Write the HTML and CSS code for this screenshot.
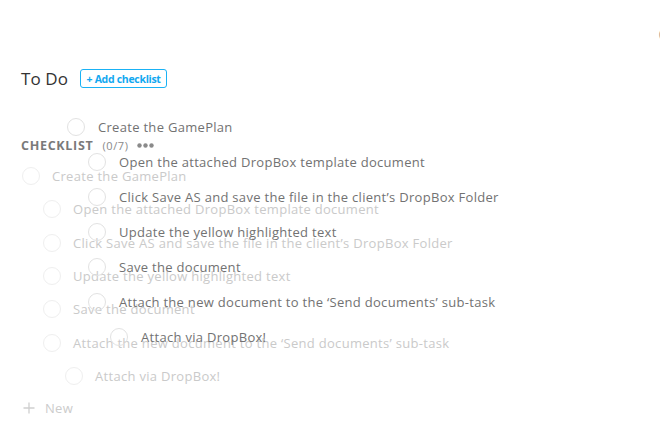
FILE: index.html
```html
<!DOCTYPE html>
<html>
<head>
<meta charset="utf-8">
<link rel="stylesheet" href="styles.css">
</head>
<body>
<div class="topbar"><span class="edge">(</span></div>
<div class="page">
  <div class="header">
    <span class="title">To Do</span>
    <button class="add-btn">+ Add checklist</button>
  </div>
  <div class="check-head">
    <span class="check-title">CHECKLIST</span>
    <span class="count">(0/7)</span>
    <svg class="dots" width="17" height="5" viewBox="0 0 17 5"><circle cx="2.5" cy="2.5" r="2.2" fill="#8a8a8a"/><circle cx="8.5" cy="2.5" r="2.2" fill="#8a8a8a"/><circle cx="14.5" cy="2.5" r="2.2" fill="#8a8a8a"/></svg>
  </div>
  <div class="list faint">
    <div class="row"><span class="circle"></span><span class="txt">Create the GamePlan</span></div>
    <div class="row l1"><span class="circle"></span><span class="txt">Open the attached DropBox template document</span></div>
    <div class="row l1"><span class="circle"></span><span class="txt">Click Save AS and save the file in the client’s DropBox Folder</span></div>
    <div class="row l1"><span class="circle"></span><span class="txt">Update the yellow highlighted text</span></div>
    <div class="row l1"><span class="circle"></span><span class="txt">Save the document</span></div>
    <div class="row l1"><span class="circle"></span><span class="txt">Attach the new document to the ‘Send documents’ sub-task</span></div>
    <div class="row l2"><span class="circle"></span><span class="txt">Attach via DropBox!</span></div>
  </div>
  <div class="new-row">
    <svg class="plus" width="12" height="12" viewBox="0 0 12 12"><path d="M6 0.5V11.5M0.5 6H11.5" stroke="#cfcfcf" stroke-width="1.3"/></svg>
    <span>New</span>
  </div>
</div>
<div class="ghost">
  <div class="row"><span class="circle"></span><span class="txt">Create the GamePlan</span></div>
  <div class="row l1"><span class="circle"></span><span class="txt">Open the attached DropBox template document</span></div>
  <div class="row l1"><span class="circle"></span><span class="txt">Click Save AS and save the file in the client’s DropBox Folder</span></div>
  <div class="row l1"><span class="circle"></span><span class="txt">Update the yellow highlighted text</span></div>
  <div class="row l1"><span class="circle"></span><span class="txt">Save the document</span></div>
  <div class="row l1"><span class="circle"></span><span class="txt">Attach the new document to the ‘Send documents’ sub-task</span></div>
  <div class="row l2"><span class="circle"></span><span class="txt">Attach via DropBox!</span></div>
</div>
</body>
</html>
```
FILE: styles.css
```css
html, body {
  margin: 0;
  padding: 0;
  background: #ffffff;
  width: 660px;
  height: 441px;
  overflow: hidden;
  position: relative;
  font-family: "Open Sans", "Liberation Sans", sans-serif;
}
.topbar {
  height: 69px;
  display: flex;
  justify-content: flex-end;
  align-items: flex-start;
}
.edge {
  margin-top: 28px;
  margin-right: -2px;
  font-size: 10px;
  color: #888;
  line-height: 12px;
}
.page {
  padding-left: 21px;
}
.header {
  display: flex;
  align-items: center;
  height: 19px;
  gap: 12px;
}
.title {
  font-size: 17px;
  color: #333;
  letter-spacing: 0.1px;
}
.add-btn {
  height: 19px;
  width: 87px;
  padding: 0;
  border: 1px solid #1ab2f5;
  border-radius: 3px;
  background: #fff;
  color: #12a8f0;
  font-family: "Open Sans", sans-serif;
  font-size: 10.5px;
  font-weight: 700;
  letter-spacing: -0.3px;
}
.check-head {
  margin-top: 49px;
  height: 16px;
  display: flex;
  align-items: center;
}
.check-title {
  font-size: 12.5px;
  font-weight: 700;
  color: #7a7a7a;
  letter-spacing: 0.7px;
}
.count {
  margin-left: 9px;
  font-size: 11px;
  color: #8a8a8a;
  letter-spacing: 0.6px;
}
.dots {
  margin-left: 8px;
}
.list {
  margin-top: 6.5px;
}
.row {
  height: 33.3px;
  display: flex;
  align-items: center;
  white-space: nowrap;
}
.row.l1 { padding-left: 21px; }
.row.l2 { padding-left: 43px; }
.circle {
  width: 16px;
  height: 16px;
  border-radius: 50%;
  border: 1px solid #efefef;
  flex: none;
  margin-left: 1px;
}
.txt {
  margin-left: 12px;
  font-size: 13px;
  letter-spacing: 0.3px;
}
.faint .txt { color: #cacaca; }
.new-row {
  height: 30px;
  display: flex;
  align-items: center;
  padding-left: 2px;
  color: #cccccc;
  font-size: 13px;
}
.new-row span { margin-left: 10px; letter-spacing: 0.3px; }
.ghost {
  position: absolute;
  left: 66px;
  top: 109.5px;
}
.ghost .row { height: 35px; }
.ghost .circle { border-color: #e2e2e2; }
.ghost .txt { color: #727272; margin-left: 13px; }
```
